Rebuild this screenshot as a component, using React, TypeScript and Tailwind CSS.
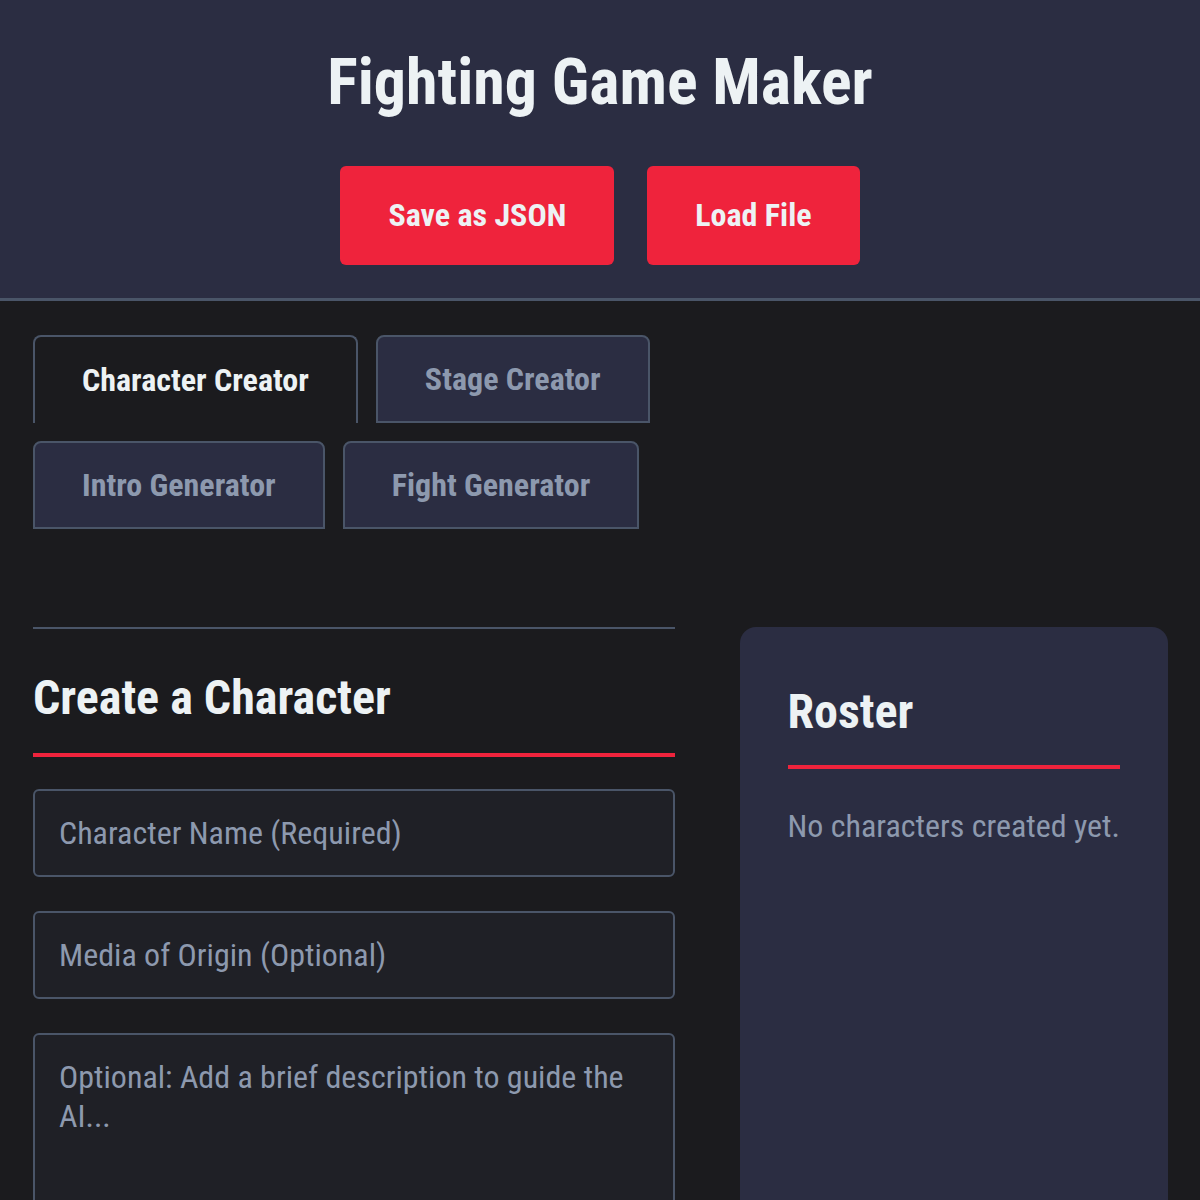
import { useState } from 'react';

const tabs = ['Character Creator', 'Stage Creator', 'Intro Generator', 'Fight Generator'];

const App = () => {
  const [active, setActive] = useState('Character Creator');
  const [name, setName] = useState('');
  const [media, setMedia] = useState('');
  const [desc, setDesc] = useState('');

  return (
    <div
      className="min-h-screen bg-[#1b1b1e] text-[#edf2f4]"
      style={{ fontFamily: '"Roboto Condensed", Roboto, "Liberation Sans", sans-serif' }}
    >
      <header className="bg-[#2b2d42] border-b-[3px] border-[#4a5568] pt-[45px] pb-[33px] flex flex-col items-center">
        <h1 className="text-[64px] leading-[1.2] font-bold">Fighting Game Maker</h1>
        <div className="flex gap-[33px] mt-[44px]">
          <button className="h-[99px] px-[48px] rounded-md bg-[#ef233c] text-[32px] font-bold text-[#edf2f4]">
            Save as JSON
          </button>
          <button className="h-[99px] px-[48px] rounded-md bg-[#ef233c] text-[32px] font-bold text-[#edf2f4]">
            Load File
          </button>
        </div>
      </header>

      <main className="pl-[33px] pr-[32px] pt-[34px]">
        <div className="flex flex-wrap gap-[18px] max-w-[640px]">
          {tabs.map(t => (
            <button
              key={t}
              onClick={() => setActive(t)}
              className={
                t === active
                  ? 'h-[88px] px-[47px] rounded-t-lg border-2 border-b-0 border-[#4a5568] bg-[#1b1b1e] text-[32px] font-bold text-[#edf2f4]'
                  : 'h-[88px] px-[47px] rounded-t-lg border-2 border-[#4a5568] bg-[#2b2d42] text-[32px] font-bold text-[#8d99ae]'
              }
            >
              {t}
            </button>
          ))}
        </div>

        <div className="grid grid-cols-[3fr_2fr] gap-[65px] mt-[98px]">
          <section className="border-t-2 border-[#4a5568] pt-[40px]">
            <h2 className="text-[48px] leading-[1.2] font-bold pb-[27px] border-b-4 border-[#ef233c]">
              Create a Character
            </h2>
            <div className="flex flex-col gap-[34px] mt-[32px]">
              <input
                value={name}
                onChange={e => setName(e.target.value)}
                placeholder="Character Name (Required)"
                className="h-[88px] px-[24px] rounded-md border-2 border-[#4a5568] bg-[#1f2026] text-[32px] text-[#edf2f4] placeholder:text-[#8d99ae] outline-none"
              />
              <input
                value={media}
                onChange={e => setMedia(e.target.value)}
                placeholder="Media of Origin (Optional)"
                className="h-[88px] px-[24px] rounded-md border-2 border-[#4a5568] bg-[#1f2026] text-[32px] text-[#edf2f4] placeholder:text-[#8d99ae] outline-none"
              />
              <textarea
                value={desc}
                onChange={e => setDesc(e.target.value)}
                placeholder="Optional: Add a brief description to guide the AI..."
                rows={5}
                className="px-[24px] py-[23px] rounded-md border-2 border-[#4a5568] bg-[#1f2026] text-[32px] leading-[1.2] text-[#edf2f4] placeholder:text-[#8d99ae] outline-none resize-none"
              />
            </div>
          </section>

          <aside className="bg-[#2b2d42] rounded-2xl px-[48px] pt-[56px] min-h-[700px]">
            <h2 className="text-[48px] leading-[1.2] font-bold pb-[25px] border-b-4 border-[#ef233c]">Roster</h2>
            <p className="mt-[38px] text-[32px] leading-[1.2] text-[#8d99ae] whitespace-nowrap">No characters created yet.</p>
          </aside>
        </div>
      </main>
    </div>
  );
};

export default App;
